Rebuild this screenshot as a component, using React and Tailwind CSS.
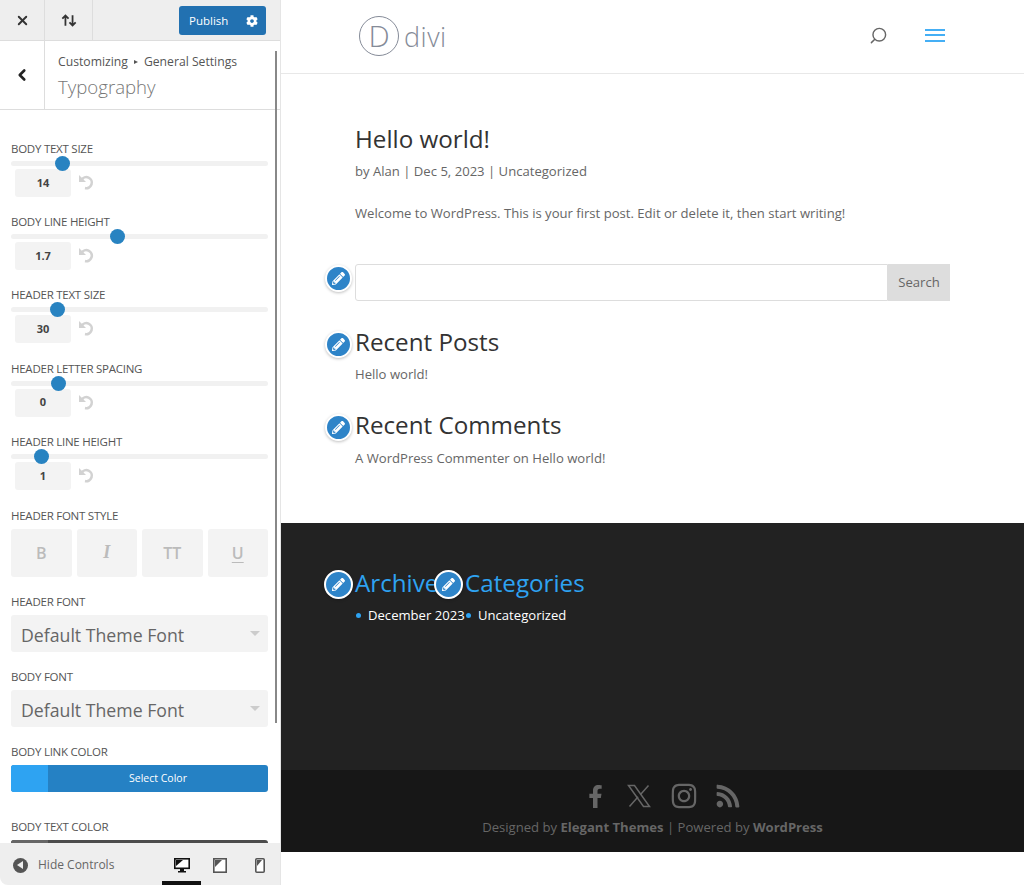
import { X, ChevronLeft, Search } from 'lucide-react'
import { FaCog, FaPencilAlt, FaFacebookF, FaInstagram, FaRss } from 'react-icons/fa'

const sliders = [
    { label: 'Body Text Size', value: '14', thumb: 62 },
    { label: 'Body Line Height', value: '1.7', thumb: 117 },
    { label: 'Header Text Size', value: '30', thumb: 57 },
    { label: 'Header Letter Spacing', value: '0', thumb: 58 },
    { label: 'Header Line Height', value: '1', thumb: 41 },
]

function Label({ children }) {
    return <div className="h-[14px] text-[11.5px] leading-[14px] font-medium uppercase tracking-[-0.25px] text-[#555]">{children}</div>
}

function SliderRow({ label, value, thumb }) {
    return (
        <div className="mb-[18.2px]">
            <Label>{label}</Label>
            <div className="relative mt-[5px] h-[5px] rounded-full bg-[#f1f1f1]">
                <div className="absolute top-[-5px] h-[15px] w-[15px] rounded-full bg-[#2883c1]" style={{ left: thumb - 11 - 7.5 }}></div>
            </div>
            <div className="mt-[3px] ml-[4px] flex items-center">
                <div className="flex h-[28px] w-[56px] items-center justify-center rounded-[3px] bg-[#f3f3f3] text-[11px] font-bold text-[#444]">{value}</div>
                <svg className="ml-[7px] mb-[2px]" width="16" height="16" viewBox="0 0 16 16" fill="none">
                    <path d="M3.5 6A5.5 5.5 0 1 1 7 14" stroke="#d2d2d2" strokeWidth="2.6" />
                    <path d="M1 1v7h7z" fill="#d2d2d2" />
                </svg>
            </div>
        </div>
    )
}

function FontSelect({ label }) {
    return (
        <div className="mb-[18px]">
            <Label>{label}</Label>
            <div className="mt-[6px] flex h-[37px] items-center justify-between rounded-[3px] bg-[#f3f3f3] pl-[10px] pr-[8px] text-[17.7px] text-[#666]">
                <span className="pt-[3px]">Default Theme Font</span>
                <span className="h-0 w-0 border-x-[5px] border-t-[5px] border-x-transparent border-t-[#ccc]"></span>
            </div>
        </div>
    )
}

function ColorPicker({ label, swatch, fill, text }) {
    return (
        <div className="mb-[28px]">
            <Label>{label}</Label>
            <div className={`mt-[6px] flex h-[27px] overflow-hidden rounded-[3px] ${fill}`}>
                <div className={`w-[37px] ${swatch}`}></div>
                <div className="flex flex-1 items-center justify-center pt-[1px] text-[10.5px] text-white">{text}</div>
            </div>
        </div>
    )
}

function EditDot({ className }) {
    return (
        <div className={`absolute flex h-[27px] w-[27px] items-center justify-center rounded-full border-2 border-white bg-[#2e84c8] text-white shadow-[0_1px_3px_rgba(0,0,0,0.25)] ${className}`}>
            <FaPencilAlt className="h-[13px] w-[13px]" />
        </div>
    )
}

function Sidebar() {
    return (
        <div className="relative flex h-[885px] w-[281px] shrink-0 flex-col border-r border-[#e5e5e5] bg-white">
            {/* top bar */}
            <div className="flex h-[41px] shrink-0 border-b border-[#ddd] bg-[#eee]">
                <div className="flex w-[45px] items-center justify-center border-r border-[#ddd]">
                    <X className="h-[15px] w-[15px] text-[#333]" strokeWidth={3} />
                </div>
                <div className="flex w-[48px] items-center justify-center border-r border-[#ddd] text-[#333]">
                    <svg width="16" height="13" viewBox="0 0 18 14" fill="none" stroke="currentColor" strokeWidth="2">
                        <path d="M5 13V2M1.5 5 5 1.5 8.5 5" />
                        <path d="M13 1v11M9.5 9 13 12.5 16.5 9" />
                    </svg>
                </div>
                <div className="ml-auto mr-[14px] mt-[6px] flex h-[29px] w-[87px] items-center justify-between rounded-[3px] bg-[#2271b1] pl-[10px] pr-[8px] text-[11.5px] text-white">
                    <span>Publish</span>
                    <FaCog className="h-[12px] w-[12px]" />
                </div>
            </div>

            {/* section title */}
            <div className="flex h-[69px] shrink-0 border-b border-[#ddd]">
                <div className="flex w-[45px] items-center justify-center border-r border-[#ddd]">
                    <ChevronLeft className="h-[18px] w-[18px] text-[#222]" strokeWidth={3.5} />
                </div>
                <div className="pl-[13px] pt-[12px]">
                    <div className="flex items-center text-[12.2px] leading-[17px] text-[#555]">
                        Customizing
                        <span className="mx-[6px] h-0 w-0 border-y-[2.5px] border-l-[4px] border-y-transparent border-l-[#555]"></span>
                        General Settings
                    </div>
                    <div className="mt-[3px] text-[18.6px] font-light leading-[27px] text-[#777]">Typography</div>
                </div>
            </div>

            {/* controls */}
            <div className="min-h-0 flex-1 overflow-hidden pl-[11px] pr-[12px] pt-[32px]">
                {sliders.map((s) => (
                    <SliderRow key={s.label} {...s} />
                ))}
                <div className="mb-[18px] pt-[1px]">
                    <Label>Header Font Style</Label>
                    <div className="mt-[6px] grid grid-cols-4 gap-[5px]">
                        <div className="flex h-[48px] items-center justify-center rounded-[3px] bg-[#f3f3f3] text-[16px] font-semibold text-[#bbb]">B</div>
                        <div className="flex h-[48px] items-center justify-center rounded-[3px] bg-[#f3f3f3] font-['Liberation_Serif',serif] text-[18px] font-bold italic text-[#bbb]">I</div>
                        <div className="flex h-[48px] items-center justify-center rounded-[3px] bg-[#f3f3f3] text-[16px] font-semibold text-[#bbb]">TT</div>
                        <div className="flex h-[48px] items-center justify-center rounded-[3px] bg-[#f3f3f3] text-[16px] font-semibold text-[#bbb] underline underline-offset-[3px]">U</div>
                    </div>
                </div>
                <FontSelect label="Header Font" />
                <FontSelect label="Body Font" />
                <ColorPicker label="Body Link Color" swatch="bg-[#2ea3f2]" fill="bg-[#2581c4]" text="Select Color" />
                <ColorPicker label="Body Text Color" swatch="bg-[#666]" fill="bg-[#4c4c4c]" />
            </div>

            {/* scrollbar */}
            <div className="absolute left-[275px] top-[51px] h-[672px] w-[2px] bg-[#888]"></div>

            {/* footer */}
            <div className="flex h-[42px] shrink-0 items-center rounded-bl-[8px] bg-[#eee] pl-[13px] pt-[2px] text-[12px] text-[#666]">
                <span className="flex h-[15px] w-[15px] items-center justify-center rounded-full bg-[#555]">
                    <span className="mr-[2px] h-0 w-0 border-y-[4px] border-r-[6px] border-y-transparent border-r-[#eee]"></span>
                </span>
                <span className="ml-[10px]">Hide Controls</span>
                <div className="relative ml-[48px] flex h-full w-[39px] items-center justify-center">
                    <svg width="16" height="15" viewBox="0 0 16 15" fill="none">
                        <rect x="0.8" y="0.8" width="14.4" height="9.5" fill="#fff" stroke="#111" strokeWidth="1.6" />
                        <path d="M2 2h7L2 8z" fill="#111" />
                        <path d="M6 11h4v2h2v1.5H4V13h2z" fill="#111" />
                    </svg>
                    <div className="absolute bottom-0 left-0 h-[4px] w-full bg-[#111]"></div>
                </div>
                <div className="ml-[9px] flex w-[19px] justify-center">
                    <svg width="14" height="15" viewBox="0 0 14 15" fill="none">
                        <rect x="0.8" y="0.8" width="12.4" height="13.4" fill="#fff" stroke="#555" strokeWidth="1.6" />
                        <path d="M2 2h7L2 9z" fill="#555" />
                    </svg>
                </div>
                <div className="ml-[26px] flex w-[10px] justify-center">
                    <svg width="10" height="15" viewBox="0 0 10 15" fill="none">
                        <rect x="0.8" y="0.8" width="8.4" height="13.4" rx="1" fill="#fff" stroke="#555" strokeWidth="1.6" />
                        <path d="M2 2h5L2 8z" fill="#555" />
                    </svg>
                </div>
            </div>
        </div>
    )
}

function Preview() {
    return (
        <div className="h-[885px] min-w-0 flex-1 bg-white">
            {/* site header */}
            <div className="flex h-[74px] items-center border-b border-[#e8e8e8] pb-[3px] pl-[78px] pr-[79px]">
                <div className="mt-[2px] flex h-[40px] w-[40px] items-center justify-center rounded-full border-[1.5px] border-[#858b98] text-[30px] font-light leading-none text-[#858b98]">D</div>
                <div className="ml-[5px] mt-[2px] text-[27px] font-light leading-none tracking-[0.5px] text-[#858b98]">divi</div>
                <Search className="ml-auto h-[19px] w-[19px] -scale-x-100 text-[#666]" strokeWidth={1.8} />
                <div className="ml-[37px] flex w-[20px] flex-col gap-[3.5px]">
                    <div className="h-[2px] bg-[#45aff5]"></div>
                    <div className="h-[2px] bg-[#45aff5]"></div>
                    <div className="h-[2px] bg-[#45aff5]"></div>
                </div>
            </div>

            {/* post + widgets */}
            <div className="h-[449px] pl-[74px] pr-[74px] pt-[47px] text-[13.1px] text-[#666]">
                <h1 className="text-[24.2px] leading-[36px] text-[#333]">Hello world!</h1>
                <p className="mt-[2px] leading-[24px]">by Alan | Dec 5, 2023 | Uncategorized</p>
                <p className="mt-[18px] leading-[24px]">Welcome to WordPress. This is your first post. Edit or delete it, then start writing!</p>

                <div className="relative mt-[39px] flex h-[37px]">
                    <EditDot className="left-[-30px] top-[1px]" />
                    <div className="flex-1 rounded-l-[3px] border border-[#ddd]"></div>
                    <div className="flex w-[62px] items-center justify-center bg-[#ddd] text-[#666]">Search</div>
                </div>

                <div className="relative mt-[23px]">
                    <EditDot className="left-[-30px] top-[7px]" />
                    <h2 className="text-[24.2px] leading-[36px] text-[#333]">Recent Posts</h2>
                </div>
                <p className="mt-[2px] leading-[24px]">Hello world!</p>

                <div className="relative mt-[21px]">
                    <EditDot className="left-[-30px] top-[7px]" />
                    <h2 className="text-[24.2px] leading-[36px] text-[#333]">Recent Comments</h2>
                </div>
                <p className="mt-[3px] leading-[24px]">A WordPress Commenter on Hello world!</p>
            </div>

            {/* dark footer */}
            <div className="h-[247px] bg-[#222] pl-[74px] pt-[42px] text-[13.1px] text-white">
                <div className="grid grid-cols-[110px_110px]">
                    <div className="relative">
                        <EditDot className="left-[-31px] top-[5px] h-[29px] w-[29px]" />
                        <h4 className="text-[24.2px] leading-[36px] text-[#2ea3f2]">Archives</h4>
                        <div className="mt-[2px] flex items-center leading-[24px]">
                            <span className="ml-[1px] h-[5px] w-[5px] shrink-0 rounded-full bg-[#2ea3f2]"></span>
                            <span className="ml-[7px] whitespace-nowrap">December 2023</span>
                        </div>
                    </div>
                    <div className="relative">
                        <EditDot className="left-[-31px] top-[5px] h-[29px] w-[29px]" />
                        <h4 className="text-[24.2px] leading-[36px] text-[#2ea3f2]">Categories</h4>
                        <div className="mt-[2px] flex items-center leading-[24px]">
                            <span className="ml-[1px] h-[5px] w-[5px] shrink-0 rounded-full bg-[#2ea3f2]"></span>
                            <span className="ml-[7px]">Uncategorized</span>
                        </div>
                    </div>
                </div>
            </div>

            {/* bottom bar */}
            <div className="flex h-[82px] flex-col items-center bg-[#171717] pt-[14px] text-[#666]">
                <div className="ml-[18px] flex h-[24px] items-center">
                    <div className="flex w-[44px] justify-center"><FaFacebookF className="h-[23px] w-[23px]" /></div>
                    <div className="flex w-[44px] justify-center">
                        <svg width="24" height="24" viewBox="0 0 24 24" fill="none" stroke="currentColor" strokeWidth="1.5">
                            <path d="M1.5 1.5h6L22.5 22.5h-6z" />
                            <path d="M21.5 1.5 13.3 10.7M2.5 22.5l8.6-9.7" />
                        </svg>
                    </div>
                    <div className="flex w-[45px] justify-center"><FaInstagram className="h-[28px] w-[28px]" /></div>
                    <div className="flex w-[44px] justify-center"><FaRss className="h-[26px] w-[26px]" /></div>
                </div>
                <div className="mt-[7px] text-[13.1px] leading-[24px]">
                    Designed by <b>Elegant Themes</b> | Powered by <b>WordPress</b>
                </div>
            </div>
        </div>
    )
}

export default function App() {
    return (
        <div className="flex h-[885px] overflow-hidden font-['Open_Sans',sans-serif]">
            <Sidebar />
            <Preview />
        </div>
    )
}
